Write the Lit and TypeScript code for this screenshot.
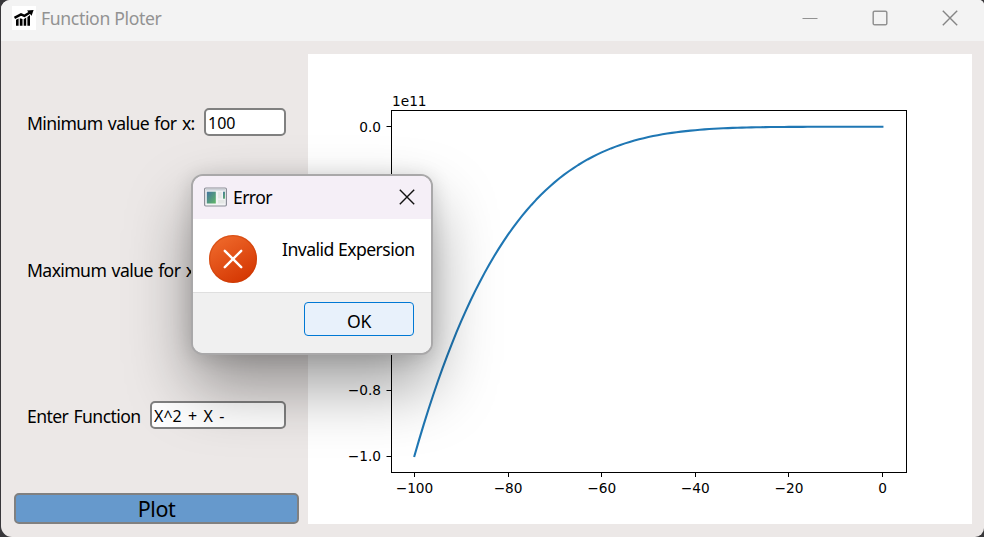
import { LitElement, html, css, svg } from "lit";
import { customElement } from "lit/decorators.js";

const AX = { left: 391.5, right: 906.5, top: 110.5, bottom: 472.5 };
const X0 = 882.5;
const XSTEP = 4.68;
const Y0 = 126.8;
const YSPAN = 329.2;

@customElement("function-chart")
class FunctionChart extends LitElement {
  static styles = css`
    :host { display: block; width: 664px; height: 470px; background: #fff; }
    svg { display: block; }
    .axis { fill: none; stroke: #000; stroke-width: 1; }
    .curve { fill: none; stroke: #1f77b4; stroke-width: 2.08; stroke-linecap: square; stroke-linejoin: round; }
    .tick { font: 13.7px "DejaVu Sans", sans-serif; fill: #000; }
    .mid { text-anchor: middle; }
    .end { text-anchor: end; }
  `;

  render() {
    const pts: string[] = [];
    for (let x = -100; x <= 0; x++) {
      pts.push(`${(X0 - 0.1 + x * XSTEP).toFixed(2)},${(Y0 + YSPAN * Math.pow(-x / 100, 5)).toFixed(2)}`);
    }
    const xs = [-100, -80, -60, -40, -20, 0];
    const ys = [0, -0.8, -1];
    const label = (s: string) => s.replace("-", "\u2212");
    return html`<svg width="664" height="470" viewBox="308 54 664 470">
      <rect class="axis" x=${AX.left} y=${AX.top} width=${AX.right - AX.left} height=${AX.bottom - AX.top}></rect>
      ${xs.map((v) => {
        const x = X0 + v * XSTEP;
        return svg`<path class="axis" d="M${Math.floor(x) + 0.5} 472v5"></path>
          <text class="tick mid" x=${x} y="493">${label(String(v))}</text>`;
      })}
      ${ys.map((v) => {
        const y = Y0 - v * YSPAN;
        return svg`<path class="axis" d="M386.5 ${Math.floor(y) + 0.5}h5"></path>
          <text class="tick end" x="381" y=${y + 5.2}>${label(v.toFixed(1))}</text>`;
      })}
      <text class="tick" x="392" y="106">1e11</text>
      <polyline class="curve" points=${pts.join(" ")}></polyline>
    </svg>`;
  }
}

@customElement("error-dialog")
class ErrorDialog extends LitElement {
  static styles = css`
    :host {
      display: flex; flex-direction: column; box-sizing: border-box;
      width: 242px; height: 181px; border: 2px solid #a9a8a9; border-radius: 12px;
      background: #fff; background-clip: padding-box;
      box-shadow: 0 32px 64px rgba(0, 0, 0, 0.38), 0 2px 20px rgba(0, 0, 0, 0.14);
      font-family: "Noto Sans", "Open Sans", sans-serif; color: #000;
    }
    .head {
      display: flex; align-items: center; height: 43px; box-sizing: border-box;
      padding: 0 16.5px 2px 11px; background: #f5eff7; border-radius: 10px 10px 0 0;
    }
    .title { flex: 1; margin-left: 6px; font-size: 17.6px; letter-spacing: -0.6px; }
    .body { display: flex; height: 73px; border-bottom: 1px solid #dfdfdf; }
    .badge { margin: 16px 0 0 16px; }
    .message { margin: 18px 0 0 25px; font-size: 17.6px; line-height: 24px; letter-spacing: -0.53px; white-space: nowrap; }
    .foot {
      flex: 1; display: flex; justify-content: flex-end; align-items: flex-start;
      padding: 9px 17px 0 0; background: #f0f0f0; border-radius: 0 0 10px 10px;
    }
    .ok {
      box-sizing: border-box; width: 110px; height: 34px; padding: 3px 0 0; border: 1px solid #0078d4;
      border-radius: 4px; background: #e8f1fb; color: #000; font: 17.6px "Noto Sans", "Open Sans", sans-serif; letter-spacing: -0.4px;
    }
  `;

  render() {
    return html`
      <div class="head">
        <svg width="23" height="20" viewBox="0 0 23 20">
          <defs><linearGradient id="pane" x1="0" y1="0" x2="1" y2="1">
            <stop offset="0" stop-color="#4373a0"></stop><stop offset="1" stop-color="#61b866"></stop>
          </linearGradient></defs>
          <rect x=".6" y="1" width="21.8" height="18" rx="1.2" fill="#f3f4f5" stroke="#8c8e98" stroke-width="1.2"></rect>
          <path d="M2 2.8h19" stroke="#c9ced6" stroke-width="1.4"></path>
          <rect x="2.8" y="4.7" width="9" height="11.8" fill="url(#pane)"></rect>
          <path d="M14 4.7h3.7v6.8H14zM14 12.7h6.6v3.8H14z" fill="#e4e7e5"></path>
          <rect x="19" y="4.7" width="2" height="7" fill="url(#pane)"></rect>
        </svg>
        <span class="title">Error</span>
        <svg width="16" height="16" viewBox="0 0 16 16" fill="none" stroke="#111" stroke-width="1.4">
          <path d="M.8.8 15.2 15.2M15.2.8.8 15.2"></path>
        </svg>
      </div>
      <div class="body">
        <svg class="badge" width="48" height="48" viewBox="0 0 48 48">
          <defs><linearGradient id="orb" x1=".2" y1="0" x2=".8" y2="1">
            <stop offset="0" stop-color="#ef6a2c"></stop><stop offset="1" stop-color="#d33400"></stop>
          </linearGradient></defs>
          <circle cx="24" cy="24" r="24" fill="url(#orb)"></circle>
          <circle cx="24" cy="24" r="23.4" fill="none" stroke="#c63c05" stroke-opacity=".45" stroke-width="1.2"></circle>
          <path d="M15.8 15.8 32.2 32.2M32.2 15.8 15.8 32.2" stroke="#fff" stroke-width="2.4" stroke-linecap="round"></path>
        </svg>
        <span class="message">Invalid Expersion</span>
      </div>
      <div class="foot"><button class="ok">OK</button></div>
    `;
  }
}

@customElement("app-root")
class AppRoot extends LitElement {
  static styles = css`
    :host {
      display: block; position: relative; width: 984px; height: 537px; overflow: hidden;
      background: #38373a; font-family: "Noto Sans", "Open Sans", sans-serif; color: #000;
    }
    .window {
      display: flex; flex-direction: column; box-sizing: border-box; height: 537px; margin-left: 1px;
      background: #ece8e7; border-radius: 9px 5px 9px 11px; overflow: hidden;
    }
    .bar { display: flex; align-items: center; height: 41px; background: #f3f3f3; padding: 0 26px 5px 11px; box-sizing: border-box; }
    .caption { flex: 1; margin-left: 5px; font-size: 17.6px; color: #929292; letter-spacing: -0.35px; }
    .controls { display: flex; gap: 54px; }
    .main { display: flex; flex: 1; padding: 13px 12px 13px 13px; }
    .side { display: flex; flex-direction: column; width: 285px; margin-right: 9px; }
    .row {
      display: flex; align-items: center; height: 146.5px; box-sizing: border-box;
      padding: 0 13px; white-space: nowrap;
    }
    .row:first-child { margin-top: -5px; }
    .label { flex: 1; font-size: 17.6px; line-height: 24px; padding-top: 2px; letter-spacing: -0.6px; word-spacing: 1.4px; }
    .field {
      box-sizing: border-box; width: 82px; height: 28px; border: 2px solid #808080; border-radius: 5px;
      background: #fff; padding: 1px 2px 0; color: #000; font: 16px "Noto Sans", "Open Sans", sans-serif;
    }
    .wide { width: 136px; word-spacing: 2.2px; }
    .plot {
      box-sizing: border-box; width: 285px; height: 31px; margin-top: auto; padding: 1px 0 0; border: 2px solid #808080;
      border-radius: 5px; background: #6699cc; color: #000; font: 21.5px/26px "Noto Sans", "Open Sans", sans-serif; letter-spacing: -0.5px;
    }
    .dialog { position: absolute; left: 191px; top: 174px; }
  `;

  render() {
    return html`
      <div class="window">
        <div class="bar">
          <svg width="24" height="24" viewBox="0 0 24 24">
            <rect width="24" height="24" fill="#fff"></rect>
            <path d="M4 13.8 6.6 12.6v7.2H4zM7.8 12.2l2.7.9v6.7H7.8zM11.7 13.2l2.5-1.6v8.2h-2.5zM15.4 11l2.6-2v10.8h-2.6z" fill="#000"></path>
            <path d="M2.5 11.8 9 8.3l3.4 1.5 6-3.6" fill="none" stroke="#000" stroke-width="2.5"></path>
            <path d="M15 4.4 21.6 4 19.6 9.8z" fill="#000"></path>
          </svg>
          <span class="caption">Function Ploter</span>
          <div class="controls">
            <svg width="16" height="16" viewBox="0 0 16 16"><path d="M.5 8.5h15" stroke="#929292"></path></svg>
            <svg width="16" height="16" viewBox="0 0 16 16"><rect x="1.2" y="1.2" width="13.6" height="13.6" rx="1.4" fill="none" stroke="#929292" stroke-width="1.5"></rect></svg>
            <svg width="16" height="16" viewBox="0 0 16 16"><path d="M.8.8 15.2 15.2M15.2.8.8 15.2" stroke="#858585" stroke-width="1.4"></path></svg>
          </div>
        </div>
        <div class="main">
          <div class="side">
            <div class="row"><span class="label">Minimum value for x:</span><input class="field" .value=${"100"}></div>
            <div class="row"><span class="label">Maximum value for x:</span><input class="field"></div>
            <div class="row"><span class="label">Enter Function</span><input class="field wide" .value=${"X^2 + X -"}></div>
            <button class="plot">Plot</button>
          </div>
          <function-chart></function-chart>
        </div>
      </div>
      <error-dialog class="dialog"></error-dialog>
    `;
  }
}
